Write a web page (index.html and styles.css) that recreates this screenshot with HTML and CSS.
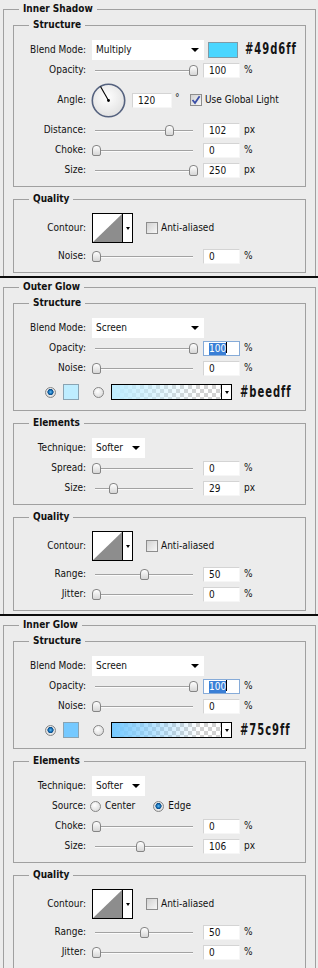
FILE: index.html
```html
<!DOCTYPE html>
<html lang="en">
<head>
<meta charset="utf-8">
<title>Layer Style</title>
<link rel="stylesheet" href="styles.css">
</head>
<body>

<section class="panel p1">
  <fieldset class="grp outer">
    <legend>Inner Shadow</legend>
    <div class="outer-body">
      <fieldset class="grp">
        <legend>Structure</legend>
        <div class="grp-body">
          <div class="row r-sel">
            <span class="lbl">Blend Mode:</span>
            <span class="select s-blend"><span class="sel-text">Multiply</span><span class="caret"></span></span>
            <span class="swatch c-49d6ff"></span>
            <span class="hex">#49d6ff</span>
          </div>
          <div class="row">
            <span class="lbl">Opacity:</span>
            <span class="slider"><span class="thumb" style="left:100%"></span></span>
            <span class="num">100</span><span class="unit">%</span>
          </div>
          <div class="row r-angle">
            <span class="lbl">Angle:</span>
            <svg class="dial" width="35" height="35" viewBox="0 0 35 35">
              <defs>
                <radialGradient id="dialfill" cx="45%" cy="40%" r="60%">
                  <stop offset="0" stop-color="#ffffff"/>
                  <stop offset="1" stop-color="#e2e2e2"/>
                </radialGradient>
              </defs>
              <circle cx="17.5" cy="17.5" r="16.2" fill="url(#dialfill)" stroke="#55627f" stroke-width="1.6"/>
              <line x1="17.5" y1="17.5" x2="9.5" y2="3.6" stroke="#000" stroke-width="1.1"/>
              <circle cx="17.5" cy="17.5" r="1.4" fill="#000"/>
            </svg>
            <span class="num n-angle">120</span>
            <span class="deg">°</span>
            <span class="check on"><svg width="10" height="10" viewBox="0 0 10 10"><path d="M1.5 5 L4 8 L8.6 1.2" fill="none" stroke="#3a4ea6" stroke-width="1.8"/></svg></span>
            <span class="chk-lbl">Use Global Light</span>
          </div>
          <div class="row">
            <span class="lbl">Distance:</span>
            <span class="slider"><span class="thumb" style="left:75.7%"></span></span>
            <span class="num">102</span><span class="unit">px</span>
          </div>
          <div class="row">
            <span class="lbl">Choke:</span>
            <span class="slider"><span class="thumb" style="left:0.8%"></span></span>
            <span class="num">0</span><span class="unit">%</span>
          </div>
          <div class="row">
            <span class="lbl">Size:</span>
            <span class="slider"><span class="thumb" style="left:100%"></span></span>
            <span class="num">250</span><span class="unit">px</span>
          </div>
        </div>
      </fieldset>
      <fieldset class="grp">
        <legend>Quality</legend>
        <div class="grp-body">
          <div class="row r-contour">
            <span class="lbl">Contour:</span>
            <span class="contour">
              <span class="contour-curve"><svg width="29" height="28" viewBox="0 0 29 28"><polygon points="0,28 29,28 29,0" fill="#8d8d8d"/></svg></span>
              <span class="contour-drop"><span class="caret small"></span></span>
            </span>
            <span class="check c-aa"></span>
            <span class="chk-lbl">Anti-aliased</span>
          </div>
          <div class="row">
            <span class="lbl">Noise:</span>
            <span class="slider"><span class="thumb" style="left:0.8%"></span></span>
            <span class="num">0</span><span class="unit">%</span>
          </div>
        </div>
      </fieldset>
    </div>
  </fieldset>
</section>

<section class="panel p2">
  <fieldset class="grp outer">
    <legend>Outer Glow</legend>
    <div class="outer-body">
      <fieldset class="grp">
        <legend>Structure</legend>
        <div class="grp-body">
          <div class="row r-sel">
            <span class="lbl">Blend Mode:</span>
            <span class="select s-blend"><span class="sel-text">Screen</span><span class="caret"></span></span>
          </div>
          <div class="row">
            <span class="lbl">Opacity:</span>
            <span class="slider"><span class="thumb" style="left:100%"></span></span>
            <span class="num focus"><span class="hl">100</span><span class="cursor"></span></span><span class="unit">%</span>
          </div>
          <div class="row">
            <span class="lbl">Noise:</span>
            <span class="slider"><span class="thumb" style="left:0.8%"></span></span>
            <span class="num">0</span><span class="unit">%</span>
          </div>
          <div class="row r-radios">
            <span class="radio on"></span>
            <span class="swatch small c-beedff"></span>
            <span class="radio r-grad"></span>
            <span class="grad c-beedff">
              <span class="grad-fill"></span>
              <span class="grad-drop"><span class="caret small"></span></span>
            </span>
            <span class="hex h-grad">#beedff</span>
          </div>
        </div>
      </fieldset>
      <fieldset class="grp">
        <legend>Elements</legend>
        <div class="grp-body">
          <div class="row r-sel">
            <span class="lbl">Technique:</span>
            <span class="select s-tech"><span class="sel-text">Softer</span><span class="caret"></span></span>
          </div>
          <div class="row">
            <span class="lbl">Spread:</span>
            <span class="slider"><span class="thumb" style="left:0.8%"></span></span>
            <span class="num">0</span><span class="unit">%</span>
          </div>
          <div class="row">
            <span class="lbl">Size:</span>
            <span class="slider"><span class="thumb" style="left:17.9%"></span></span>
            <span class="num">29</span><span class="unit">px</span>
          </div>
        </div>
      </fieldset>
      <fieldset class="grp">
        <legend>Quality</legend>
        <div class="grp-body">
          <div class="row r-contour">
            <span class="lbl">Contour:</span>
            <span class="contour">
              <span class="contour-curve"><svg width="29" height="28" viewBox="0 0 29 28"><polygon points="0,28 29,28 29,0" fill="#8d8d8d"/></svg></span>
              <span class="contour-drop"><span class="caret small"></span></span>
            </span>
            <span class="check c-aa"></span>
            <span class="chk-lbl">Anti-aliased</span>
          </div>
          <div class="row">
            <span class="lbl">Range:</span>
            <span class="slider"><span class="thumb" style="left:49.8%"></span></span>
            <span class="num">50</span><span class="unit">%</span>
          </div>
          <div class="row">
            <span class="lbl">Jitter:</span>
            <span class="slider"><span class="thumb" style="left:0.8%"></span></span>
            <span class="num">0</span><span class="unit">%</span>
          </div>
        </div>
      </fieldset>
    </div>
  </fieldset>
</section>

<section class="panel p3">
  <fieldset class="grp outer">
    <legend>Inner Glow</legend>
    <div class="outer-body">
      <fieldset class="grp">
        <legend>Structure</legend>
        <div class="grp-body">
          <div class="row r-sel">
            <span class="lbl">Blend Mode:</span>
            <span class="select s-blend"><span class="sel-text">Screen</span><span class="caret"></span></span>
          </div>
          <div class="row">
            <span class="lbl">Opacity:</span>
            <span class="slider"><span class="thumb" style="left:100%"></span></span>
            <span class="num focus"><span class="hl">100</span><span class="cursor"></span></span><span class="unit">%</span>
          </div>
          <div class="row">
            <span class="lbl">Noise:</span>
            <span class="slider"><span class="thumb" style="left:0.8%"></span></span>
            <span class="num">0</span><span class="unit">%</span>
          </div>
          <div class="row r-radios">
            <span class="radio on"></span>
            <span class="swatch small c-75c9ff"></span>
            <span class="radio r-grad"></span>
            <span class="grad c-75c9ff">
              <span class="grad-fill"></span>
              <span class="grad-drop"><span class="caret small"></span></span>
            </span>
            <span class="hex h-grad">#75c9ff</span>
          </div>
        </div>
      </fieldset>
      <fieldset class="grp">
        <legend>Elements</legend>
        <div class="grp-body">
          <div class="row r-sel">
            <span class="lbl">Technique:</span>
            <span class="select s-tech"><span class="sel-text">Softer</span><span class="caret"></span></span>
          </div>
          <div class="row">
            <span class="lbl">Source:</span>
            <span class="radio r-src"></span>
            <span class="radio-lbl">Center</span>
            <span class="radio on r-src2"></span>
            <span class="radio-lbl">Edge</span>
          </div>
          <div class="row">
            <span class="lbl">Choke:</span>
            <span class="slider"><span class="thumb" style="left:0.8%"></span></span>
            <span class="num">0</span><span class="unit">%</span>
          </div>
          <div class="row">
            <span class="lbl">Size:</span>
            <span class="slider"><span class="thumb" style="left:46%"></span></span>
            <span class="num">106</span><span class="unit">px</span>
          </div>
        </div>
      </fieldset>
      <fieldset class="grp">
        <legend>Quality</legend>
        <div class="grp-body">
          <div class="row r-contour">
            <span class="lbl">Contour:</span>
            <span class="contour">
              <span class="contour-curve"><svg width="29" height="28" viewBox="0 0 29 28"><polygon points="0,28 29,28 29,0" fill="#8d8d8d"/></svg></span>
              <span class="contour-drop"><span class="caret small"></span></span>
            </span>
            <span class="check c-aa"></span>
            <span class="chk-lbl">Anti-aliased</span>
          </div>
          <div class="row">
            <span class="lbl">Range:</span>
            <span class="slider"><span class="thumb" style="left:49.8%"></span></span>
            <span class="num">50</span><span class="unit">%</span>
          </div>
          <div class="row">
            <span class="lbl">Jitter:</span>
            <span class="slider"><span class="thumb" style="left:0.8%"></span></span>
            <span class="num">0</span><span class="unit">%</span>
          </div>
        </div>
      </fieldset>
    </div>
  </fieldset>
</section>

</body>
</html>
```

FILE: styles.css
```css
html, body {
  margin: 0;
  padding: 0;
}

body {
  width: 318px;
  background: #ececec;
  color: #111;
  font: 10px/14px "DejaVu Sans Condensed", "DejaVu Sans", sans-serif;
}

/* cropped dialog panels */
.panel {
  height: 276px;
  overflow: hidden;
  border-bottom: 2px solid #0c0c0c;
}
.p2 { height: 336px; }
.p3 { height: 352px; border-bottom: none; }

/* group boxes */
.grp {
  margin: 0;
  padding: 0;
  min-width: 0;
  border: 1px solid #a0a0a0;
}
.grp > legend {
  margin-left: 15px;
  padding: 0 4px;
  font: bold 10px/14px "DejaVu Sans Condensed", "DejaVu Sans", sans-serif;
  color: #111;
}
.grp + .grp { margin-top: 5px; }
.grp-body { padding: 7px 0 6px; }

.outer {
  margin: 2px 0 0 3px;
  width: 313px;
  box-sizing: border-box;
}
.outer-body { padding: 2px 9px 30px; }

/* rows */
.row {
  display: flex;
  align-items: center;
  height: 20px;
  white-space: nowrap;
}
.r-sel { height: 21px; }
.r-angle { height: 40px; }
.r-contour { height: 30px; margin-bottom: 3px; }
.r-radios { height: 24px; margin-top: 2px; padding-left: 31px; }

.lbl {
  flex: none;
  width: 72px;
  text-align: right;
}

/* dropdowns */
.select {
  flex: none;
  display: flex;
  align-items: center;
  box-sizing: border-box;
  height: 20px;
  margin-left: 6px;
  padding-left: 4px;
  background: #fff;
}
.s-blend { width: 112px; }
.s-tech { width: 53px; }
.sel-text { flex: 1; }
.caret {
  flex: none;
  width: 0;
  height: 0;
  margin-right: 5px;
  border-left: 4px solid transparent;
  border-right: 4px solid transparent;
  border-top: 4px solid #000;
}
.caret.small {
  margin: 0;
  border-left-width: 2.5px;
  border-right-width: 2.5px;
  border-top-width: 3px;
}

/* colour swatches */
.swatch {
  flex: none;
  box-sizing: border-box;
  width: 30px;
  height: 16px;
  margin-left: 4px;
  border: 1px solid #7f9aa6;
  background: var(--c);
}
.swatch.small {
  width: 16px;
  height: 16px;
  margin-left: 7px;
  border-color: #8aa3b2;
}
.c-49d6ff { --c: #49d6ff; }
.c-beedff { --c: #beedff; }
.c-75c9ff { --c: #75c9ff; }

.hex {
  flex: none;
  margin-left: 7px;
  font: bold 15px/1 "DejaVu Sans Condensed", "DejaVu Sans", sans-serif;
  letter-spacing: 1.3px;
  color: #141414;
  transform: scaleX(0.74);
  transform-origin: left center;
}
.h-grad { margin-left: 8px; }

/* sliders */
.slider {
  flex: none;
  position: relative;
  width: 98px;
  height: 20px;
  margin-left: 9px;
}
.slider::before {
  content: "";
  position: absolute;
  left: 0;
  right: 0;
  top: 10px;
  height: 1px;
  background: #a2a2a2;
  border-bottom: 1px solid #fbfbfb;
}
.thumb {
  position: absolute;
  top: 5px;
  width: 9px;
  height: 11px;
  margin-left: -4px;
  box-sizing: border-box;
  border: 1px solid #858585;
  border-radius: 4px 4px 2px 2px;
  background: linear-gradient(to bottom, #ffffff, #d6d6d6);
}

/* numeric fields */
.num {
  flex: none;
  box-sizing: border-box;
  width: 37px;
  height: 15px;
  margin-left: 10px;
  padding-left: 5px;
  background: #fff;
  border: 1px solid;
  border-color: #d4d4d4 #f6f6f6 #f6f6f6 #d4d4d4;
  line-height: 13px;
}
.num.focus { border-color: #86abd8; }
.hl {
  display: inline-block;
  background: #3a7fd6;
  color: #fff;
  line-height: 12px;
}
.cursor {
  display: inline-block;
  width: 1px;
  height: 11px;
  background: #000;
  vertical-align: -1px;
}
.unit {
  flex: none;
  margin-left: 4px;
}

/* angle */
.dial {
  flex: none;
  margin-left: 5px;
}
.n-angle {
  width: 40px;
  margin-left: 6px;
}
.deg {
  flex: none;
  width: 8px;
  margin-left: 3px;
  align-self: flex-start;
  margin-top: 11px;
}

/* checkboxes */
.check {
  flex: none;
  display: flex;
  align-items: center;
  justify-content: center;
  box-sizing: border-box;
  width: 12px;
  height: 12px;
  margin-left: 7px;
  border: 1px solid #8d8d8d;
  background: linear-gradient(135deg, #d2d2d2, #f7f7f7);
}
.check.c-aa { margin-left: 13px; }
.chk-lbl {
  flex: none;
  margin-left: 3px;
}

/* contour picker */
.contour {
  flex: none;
  display: flex;
  box-sizing: border-box;
  width: 41px;
  height: 30px;
  margin-left: 6px;
  border: 1px solid #000;
  background: #fff;
}
.contour-curve {
  display: block;
  width: 29px;
  height: 28px;
}
.contour-curve svg { display: block; }
.contour-drop {
  flex: 1;
  display: flex;
  align-items: center;
  justify-content: center;
  border-left: 1px solid #000;
}

/* radios */
.radio {
  flex: none;
  box-sizing: border-box;
  width: 11px;
  height: 11px;
  border-radius: 50%;
  border: 1px solid #868686;
  background: radial-gradient(circle at 40% 35%, #ffffff, #d3d3d3);
}
.radio.on {
  background: radial-gradient(circle at 50% 45%, #6fc3f2 0, #1c78c0 1.6px, #0b4c86 2.8px, #e9e9e9 3.4px, #cfcfcf 100%);
}
.r-grad { margin-left: 14px; }
.r-src { margin-left: 4px; }
.r-src2 { margin-left: 18px; }
.radio-lbl {
  flex: none;
  margin-left: 4px;
}

/* gradient picker */
.grad {
  flex: none;
  display: flex;
  box-sizing: border-box;
  width: 121px;
  height: 16px;
  margin-left: 7px;
  border: 1px solid #000;
  background: #fff;
}
.grad-fill {
  flex: 1;
  background-color: #fff;
  background-image:
    linear-gradient(to right, var(--c) 0%, transparent 80%),
    linear-gradient(45deg, #d2d2d2 25%, transparent 25%, transparent 75%, #d2d2d2 75%),
    linear-gradient(45deg, #d2d2d2 25%, transparent 25%, transparent 75%, #d2d2d2 75%);
  background-size: 100% 100%, 8px 8px, 8px 8px;
  background-position: 0 0, 0 0, 4px 4px;
}
.grad-drop {
  flex: none;
  display: flex;
  align-items: center;
  justify-content: center;
  width: 9px;
  border-left: 1px solid #000;
}
```
